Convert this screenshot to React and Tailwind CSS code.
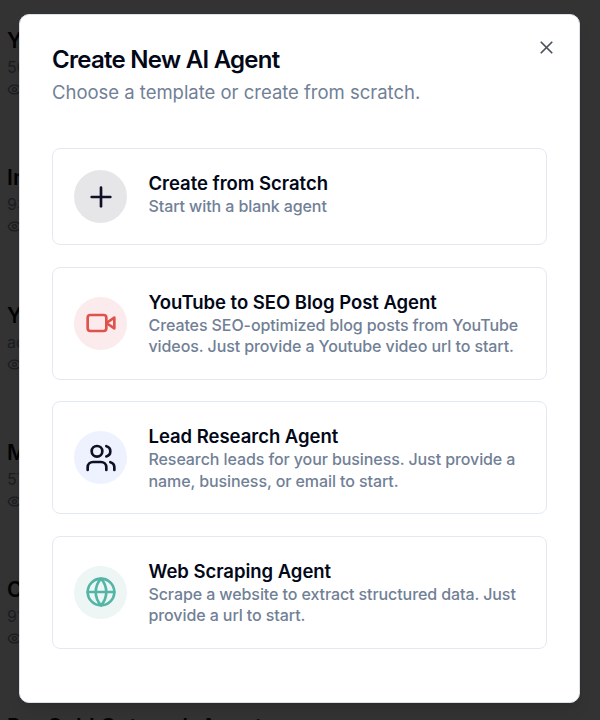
import { Plus, Users, X, Eye } from "lucide-react";

function CameraIcon({ className }) {
  return (
    <svg viewBox="0 0 24 24" fill="none" stroke="currentColor" strokeWidth="2" strokeLinecap="round" strokeLinejoin="round" className={className}>
      <path d="m22 8-6 4 6 4V8Z" />
      <rect width="14" height="12" x="2" y="6" rx="2" ry="2" />
    </svg>
  );
}

function GlobeIcon({ className }) {
  return (
    <svg viewBox="0 0 24 24" fill="none" stroke="currentColor" strokeWidth="2" strokeLinecap="round" strokeLinejoin="round" className={className}>
      <circle cx="12" cy="12" r="10" />
      <line x1="2" x2="22" y1="12" y2="12" />
      <path d="M12 2a15.3 15.3 0 0 1 4 10 15.3 15.3 0 0 1-4 10 15.3 15.3 0 0 1-4-10 15.3 15.3 0 0 1 4-10z" />
    </svg>
  );
}

const templates = [
  { icon: Plus, circle: "bg-[#e6e6e8]", ink: "text-[#0f1025]", title: "Create from Scratch", lines: ["Start with a blank agent"], box: "h-[97px]", text: "pb-[5px]" },
  { icon: CameraIcon, circle: "bg-[#fcebec]", ink: "text-[#e0524c]", title: "YouTube to SEO Blog Post Agent", lines: ["Creates SEO-optimized blog posts from YouTube", "videos. Just provide a Youtube video url to start."], box: "h-[113px]", text: "" },
  { icon: Users, circle: "bg-[#edf2fe]", ink: "text-[#0f1025]", title: "Lead Research Agent", lines: ["Research leads for your business. Just provide a", "name, business, or email to start."], box: "h-[113px]", text: "" },
  { icon: GlobeIcon, circle: "bg-[#edf6f5]", ink: "text-[#52b5a5]", title: "Web Scraping Agent", lines: ["Scrape a website to extract structured data. Just", "provide a url to start."], box: "h-[113px]", text: "" },
];

const agents = [
  ["YouTube Agent", "50 runs"],
  ["Investor Agent", "93 runs"],
  ["YouTube Agent", "ad runs"],
  ["Meeting Agent", "57 runs"],
  ["Content Agent", "91 runs"],
  ["Pro Gold Outreach Agent", "12 runs"],
];

function AgentList() {
  return (
    <div className="pl-[7px] pt-[26px]">
      {agents.map(([name, runs], i) => (
        <div key={i} className="h-[137.3px]">
          <div className="text-[21px] leading-[30px] font-semibold tracking-[0.15px] text-[#030304]">{name}</div>
          <div className="text-[16px] leading-[22px] text-[#1b1d21]">{runs}</div>
          <Eye className="mt-[4px] size-[15px] text-[#1b1d21]" strokeWidth={2} />
        </div>
      ))}
    </div>
  );
}

function TemplateCard({ item }) {
  const Icon = item.icon;
  return (
    <button className={`flex w-full items-center rounded-lg border border-[#e4e9f1] pl-[21.4px] text-left ${item.box}`}>
      <span className={`flex size-[53px] shrink-0 items-center justify-center rounded-full ${item.circle}`}>
        <Icon className={`size-[32px] ${item.ink}`} strokeWidth={2} />
      </span>
      <span className={`ml-[21.1px] flex flex-col whitespace-nowrap ${item.text}`}>
        <span className="text-[18.5px] leading-[26px] font-semibold tracking-[-0.03px] text-[#020817]">{item.title}</span>
        {item.lines.map((line) => (
          <span key={line} className="text-[16px] leading-[21.2px] font-medium tracking-[-0.09px] text-[#718096]">{line}</span>
        ))}
      </span>
    </button>
  );
}

export default function App() {
  return (
    <div className="relative h-[720px] w-[600px] overflow-hidden bg-[#333333] font-['Inter',sans-serif]">
      <AgentList />
      <div className="absolute left-[19px] top-[14px] h-[689px] w-[561px] rounded-[10px] border border-[#dce1e8] bg-white px-[32px] pt-[30px] shadow-lg">
        <button className="absolute right-[22px] top-[22px]" aria-label="Close">
          <X className="size-[21px] text-[#4d515c]" strokeWidth={2} />
        </button>
        <h2 className="text-[24px] leading-[30px] font-semibold tracking-[-0.72px] text-[#020817]">Create New AI Agent</h2>
        <p className="mt-[4px] text-[18.5px] leading-[26px] tracking-[-0.02px] text-[#718096]">Choose a template or create from scratch.</p>
        <div className="mt-[43px] flex flex-col gap-[21.5px]">
          {templates.map((item) => (
            <TemplateCard key={item.title} item={item} />
          ))}
        </div>
      </div>
    </div>
  );
}
